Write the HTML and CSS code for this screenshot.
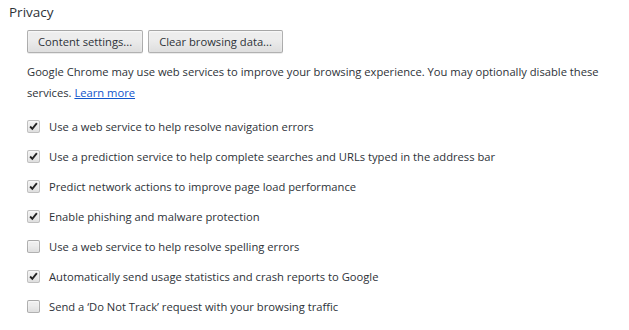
FILE: index.html
```html
<!DOCTYPE html>
<html lang="en">
<head>
    <meta charset="UTF-8">
    <title>Privacy</title>
    <link rel="stylesheet" href="styles.css">
</head>
<body>
    <section class="settings-section">
        <h3>Privacy</h3>
        <div class="section-body">
            <div class="button-row">
                <button class="btn">Content settings...</button>
                <button class="btn">Clear browsing data...</button>
            </div>
            <p class="note">Google Chrome may use web services to improve your browsing experience. You may optionally disable these services. <a href="#">Learn more</a></p>
            <label class="checkbox"><input type="checkbox" checked><span class="box"></span>Use a web service to help resolve navigation errors</label>
            <label class="checkbox"><input type="checkbox" checked><span class="box"></span>Use a prediction service to help complete searches and URLs typed in the address bar</label>
            <label class="checkbox"><input type="checkbox" checked><span class="box"></span>Predict network actions to improve page load performance</label>
            <label class="checkbox"><input type="checkbox" checked><span class="box"></span>Enable phishing and malware protection</label>
            <label class="checkbox"><input type="checkbox"><span class="box"></span>Use a web service to help resolve spelling errors</label>
            <label class="checkbox"><input type="checkbox" checked><span class="box"></span>Automatically send usage statistics and crash reports to Google</label>
            <label class="checkbox"><input type="checkbox"><span class="box"></span>Send a ‘Do Not Track’ request with your browsing traffic</label>
        </div>
    </section>
</body>
</html>
```

FILE: styles.css
```css
body {
    margin: 0;
    padding: 3px 0 0 9px;
    background-color: white;
    color: #2d3238;
    font-family: "Open Sans", Arial, sans-serif;
    font-size: 11.2px;
}
h3 {
    margin: 0;
    font-size: 13.5px;
    font-weight: normal;
    line-height: 18px;
}
.section-body {
    padding-left: 18px;
}
.button-row {
    display: flex;
    gap: 5px;
    margin-top: 9px;
}
.btn {
    height: 23px;
    padding: 0 10px;
    font-family: inherit;
    font-size: 11.2px;
    color: #2d3238;
    border: 1px solid rgba(0,0,0,0.25);
    border-radius: 2px;
    background: linear-gradient(#ededed, #ededed 38%, #dedede);
    box-shadow: 0 1px 0 rgba(0,0,0,0.08), inset 0 1px 2px rgba(255,255,255,0.75);
}
.note {
    margin: 8px 0 8px;
    line-height: 21px;
}
.note a {
    color: #15c;
}
.checkbox {
    display: flex;
    align-items: center;
    height: 30px;
}
.checkbox input {
    display: none;
}
.box {
    box-sizing: border-box;
    width: 13px;
    height: 13px;
    margin-right: 9px;
    border: 1px solid rgba(0,0,0,0.25);
    border-radius: 2px;
    background: linear-gradient(#ededed, #ededed 38%, #dedede);
    box-shadow: inset 0 1px 2px rgba(255,255,255,0.75);
}
.checkbox input:checked + .box {
    background-image: url("data:image/svg+xml,%3Csvg xmlns='http://www.w3.org/2000/svg' viewBox='0 0 13 13'%3E%3Cpath d='M2.5 6.5l2.6 2.8L10.5 2.5' fill='none' stroke='%23222' stroke-width='2.2'/%3E%3C/svg%3E"), linear-gradient(#ededed, #ededed 38%, #dedede);
    background-size: 11px 11px, auto;
    background-position: center;
    background-repeat: no-repeat;
}
```
